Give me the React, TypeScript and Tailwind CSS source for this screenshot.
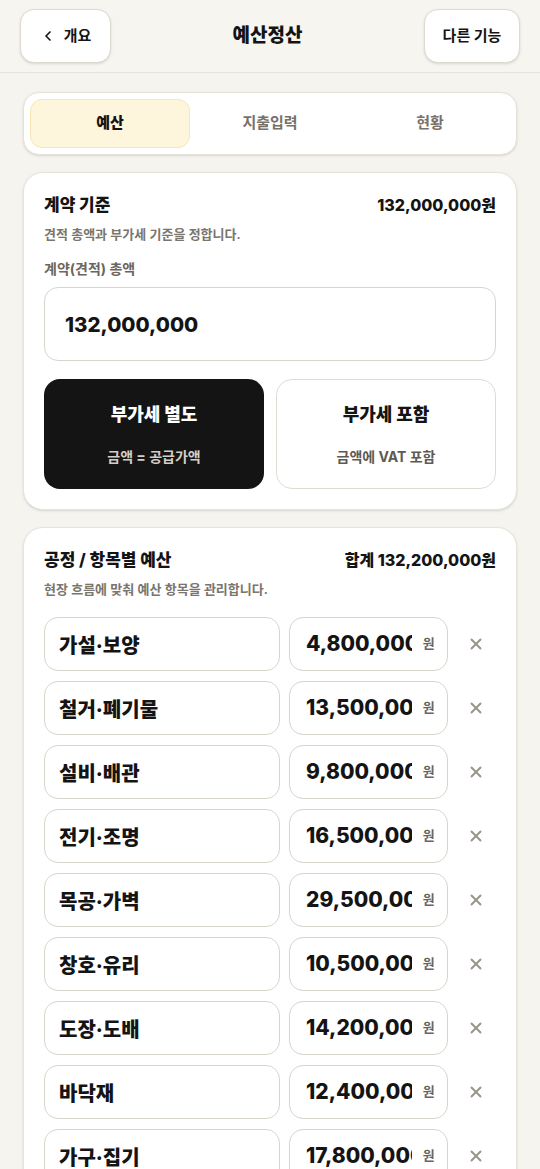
import { ChevronLeft, X } from 'lucide-react';

const items = [
  { name: '가설·보양', amount: '4,800,000' },
  { name: '철거·폐기물', amount: '13,500,000' },
  { name: '설비·배관', amount: '9,800,000' },
  { name: '전기·조명', amount: '16,500,000' },
  { name: '목공·가벽', amount: '29,500,000' },
  { name: '창호·유리', amount: '10,500,000' },
  { name: '도장·도배', amount: '14,200,000' },
  { name: '바닥재', amount: '12,400,000' },
  { name: '가구·집기', amount: '17,800,000' },
];

const tabs = ['예산', '지출입력', '현황'];

export default function App() {
  return (
    <div className="min-h-[1169px] bg-[#f6f4ef] font-['Inter','Noto_Sans_CJK_KR',sans-serif] text-[#141414]">
      <header className="flex h-[73px] items-center justify-between border-b border-[#e7e3db] bg-[#f7f5f0] px-5">
        <button className="flex h-[54px] w-[91px] items-center justify-center gap-2 rounded-[14px] border border-[#dedad2] bg-white text-[15px] font-bold shadow-sm">
          <ChevronLeft className="h-4 w-4" strokeWidth={2.5} />
          개요
        </button>
        <h1 className="text-[19px] font-extrabold">예산정산</h1>
        <button className="flex h-[54px] w-[96px] items-center justify-center rounded-[14px] border border-[#dedad2] bg-white text-[15px] font-bold shadow-sm">
          다른 기능
        </button>
      </header>

      <main className="flex flex-col gap-[17px] px-[23px] pt-[19px]">
        <div className="grid grid-cols-3 rounded-[16px] border border-[#e6e2da] bg-white p-[6px] shadow-sm">
          {tabs.map((t, i) => (
            <div
              key={t}
              className={
                i === 0
                  ? 'flex h-[49px] items-center justify-center rounded-[12px] border border-[#f6e7b4] bg-[#fef5dd] text-[15px] font-extrabold'
                  : 'flex h-[49px] items-center justify-center text-[15px] font-bold text-[#77716a]'
              }
            >
              {t}
            </div>
          ))}
        </div>

        <section className="rounded-[20px] border border-[#e8e4dc] bg-white px-5 pb-5 pt-5 shadow-sm">
          <div className="flex items-center justify-between">
            <h2 className="text-[17px] font-extrabold leading-[22px]">계약 기준</h2>
            <span className="text-[16px] font-extrabold">132,000,000원</span>
          </div>
          <p className="mt-[7px] text-[13px] font-semibold leading-5 text-[#7a756d]">견적 총액과 부가세 기준을 정합니다.</p>
          <p className="mt-[15px] text-[14px] font-bold leading-5 text-[#6b665e]">계약(견적) 총액</p>
          <input
            readOnly
            value="132,000,000"
            className="mt-[8px] h-[74px] w-full rounded-[14px] border border-[#d9d5cd] px-5 text-[20.5px] font-extrabold outline-none"
          />
          <div className="mt-[18px] grid grid-cols-2 gap-3">
            <button className="flex h-[110px] flex-col items-center justify-center gap-[18px] rounded-[16px] bg-[#141414] text-white">
              <span className="text-[18px] font-extrabold">부가세 별도</span>
              <span className="text-[14px] font-bold text-[#d3cec5]">금액 = 공급가액</span>
            </button>
            <button className="flex h-[110px] flex-col items-center justify-center gap-[18px] rounded-[16px] border border-[#e0dcd4] bg-white">
              <span className="text-[18px] font-extrabold">부가세 포함</span>
              <span className="text-[14px] font-bold text-[#5e5a53]">금액에 VAT 포함</span>
            </button>
          </div>
        </section>

        <section className="rounded-[20px] border border-[#e8e4dc] bg-white px-5 pb-5 pt-5 shadow-sm">
          <div className="flex items-center justify-between">
            <h2 className="text-[17px] font-extrabold leading-[22px]">공정 / 항목별 예산</h2>
            <span className="text-[16px] font-extrabold">합계 132,200,000원</span>
          </div>
          <p className="mt-[7px] text-[13px] font-semibold leading-5 text-[#7a756d]">현장 흐름에 맞춰 예산 항목을 관리합니다.</p>
          <div className="mt-[18px] flex flex-col gap-[10px]">
            {items.map((it) => (
              <div key={it.name} className="flex items-center gap-[9px]">
                <input
                  readOnly
                  value={it.name}
                  className="h-[54px] w-[236px] rounded-[14px] border border-[#d9d5cd] px-[14px] text-[20px] font-extrabold outline-none"
                />
                <div className="flex h-[54px] w-[161px] items-center rounded-[14px] border border-[#d9d5cd] pl-4 pr-3">
                  <input
                    readOnly
                    value={it.amount}
                    className="w-[106px] min-w-0 text-[21px] font-extrabold outline-none"
                  />
                  <span className="ml-auto text-[13px] font-bold text-[#6b665e]">원</span>
                </div>
                <button className="flex h-[40px] w-[40px] items-center justify-center text-[#9a958c]">
                  <X className="h-[18px] w-[18px]" strokeWidth={2.5} />
                </button>
              </div>
            ))}
          </div>
        </section>
      </main>
    </div>
  );
}
